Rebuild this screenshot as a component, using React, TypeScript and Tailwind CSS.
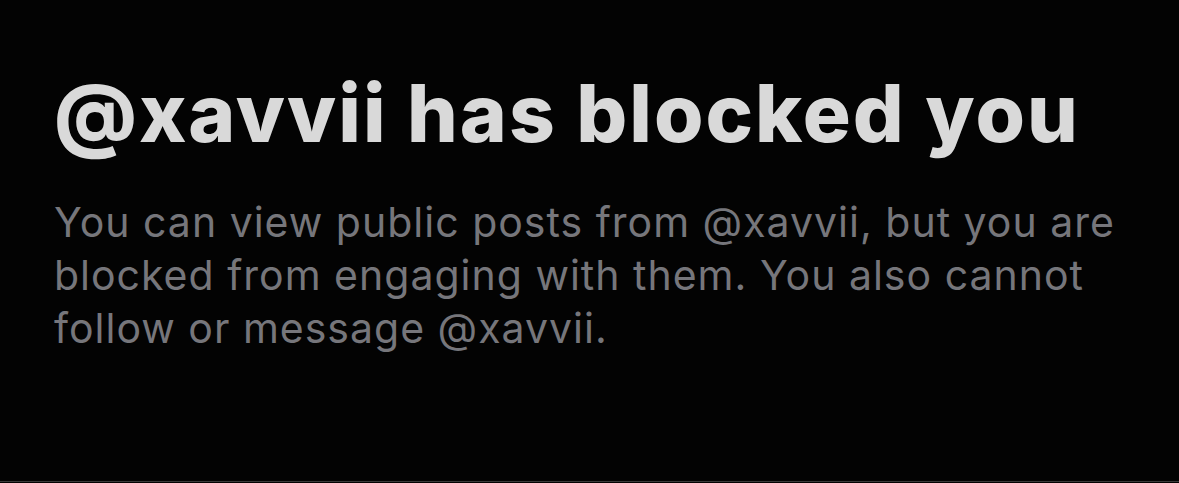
export default function App() {
  return (
    <div className="w-[1179px] h-[483px] bg-[#030303] flex flex-col overflow-hidden" style={{ fontFamily: "Inter, 'Noto Sans', sans-serif" }}>
      <div className="flex-1 pl-[54px] pt-[73px]">
        <h1 className="text-[80px] leading-[80px] font-extrabold text-[#d9d9d9] tracking-[2px] whitespace-nowrap">
          @xavvii has blocked you
        </h1>
        <p className="mt-[43px] text-[41px] leading-[53px] text-[#76767b] tracking-[1px] whitespace-nowrap">
          You can view public posts from @xavvii, but you are
          <br />
          blocked from engaging with them. You also cannot
          <br />
          follow or message @xavvii.
        </p>
      </div>
      <div className="h-[1px] bg-[#3a3a3a] mb-[1px]" />
    </div>
  );
}
